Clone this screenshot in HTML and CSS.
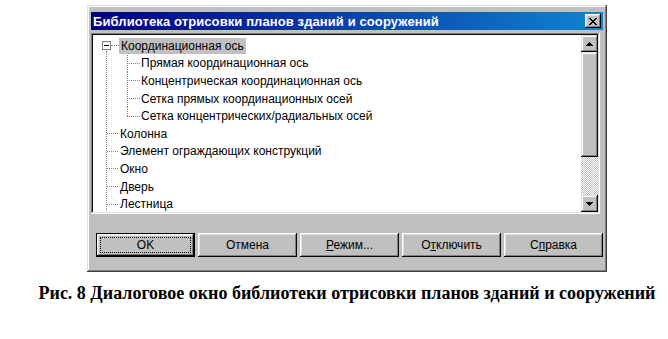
FILE: index.html
```html
<!DOCTYPE html>
<html lang="ru">
<head>
  <meta charset="UTF-8">
  <title>Библиотека отрисовки планов зданий и сооружений</title>
  <link rel="stylesheet" href="styles.css">
</head>
<body>
  <div class="figure">
    <div class="dialog">
      <!-- title bar -->
      <div class="titlebar">
        <span class="title">Библиотека отрисовки планов зданий и сооружений</span>
        <span class="close">
          <svg width="8" height="7" viewBox="0 0 8 7"><path d="M0 0h2v1h1v1h2V1h1V0h2v1H7v1H6v1H5v1h1v1h1v1h1v1H6V6H5V5H3v1H2v1H0V6h1V5h1V4h1V3H2V2H1V1H0z" fill="#000"/></svg>
        </span>
      </div>

      <!-- tree -->
      <div class="tree-box">
        <div class="tree">
          <div class="row root">
            <span class="expander"><i></i></span>
            <span class="hline"></span>
            <span class="label selected">Координационная ось</span>
          </div>
          <div class="level">
            <ul class="sub">
              <li class="item"><span class="stub"></span><span class="label">Прямая координационная ось</span></li>
              <li class="item"><span class="stub"></span><span class="label">Концентрическая координационная ось</span></li>
              <li class="item"><span class="stub"></span><span class="label">Сетка прямых координационных осей</span></li>
              <li class="item last"><span class="stub"></span><span class="label">Сетка концентрических/радиальных осей</span></li>
            </ul>
            <ul class="top">
              <li class="item"><span class="hline"></span><span class="label">Колонна</span></li>
              <li class="item"><span class="hline"></span><span class="label">Элемент ограждающих конструкций</span></li>
              <li class="item"><span class="hline"></span><span class="label">Окно</span></li>
              <li class="item"><span class="hline"></span><span class="label">Дверь</span></li>
              <li class="item"><span class="hline"></span><span class="label">Лестница</span></li>
            </ul>
          </div>
        </div>
        <div class="scrollbar">
          <span class="sb-btn">
            <svg width="7" height="4" viewBox="0 0 7 4"><path d="M3 0h1v1h1v1h1v1h1v1H0V3h1V2h1V1h1z" fill="#000"/></svg>
          </span>
          <span class="sb-thumb"></span>
          <span class="sb-track"></span>
          <span class="sb-btn">
            <svg width="7" height="4" viewBox="0 0 7 4"><path d="M0 0h7v1H6v1H5v1H4v1H3V3H2V2H1V1H0z" fill="#000"/></svg>
          </span>
        </div>
      </div>

      <!-- buttons -->
      <div class="buttons">
        <button class="btn default"><span class="focus">OK</span></button>
        <button class="btn">Отмена</button>
        <button class="btn"><u>Р</u>ежим...</button>
        <button class="btn">О<u>т</u>ключить</button>
        <button class="btn">С<u>п</u>равка</button>
      </div>
    </div>

    <p class="caption">Рис. 8 Диалоговое окно библиотеки отрисовки планов зданий и сооружений</p>
  </div>
</body>
</html>
```

FILE: styles.css
```css
/* page */
body {
  margin: 0;
  background: #fff;
  font-family: "Liberation Sans", Arial, sans-serif;
}

.figure {
  width: 520px;
  padding: 5px 0 0 87px;
}

/* dialog window */
.dialog {
  box-sizing: border-box;
  width: 520px;
  height: 267px;
  padding: 7px 4px 3px 4px;
  background: #c0c0c0;
  box-shadow: inset -1px -1px #404040, inset 1px 1px #dfdfdf, inset -2px -2px #808080, inset 2px 2px #fff;
}

.titlebar {
  height: 18px;
  display: flex;
  align-items: center;
  justify-content: space-between;
  padding: 0 2px 0 2px;
  background: linear-gradient(to right, #000080, #1084d0);
}

.title {
  color: #fff;
  font-weight: bold;
  font-size: 13px;
  letter-spacing: 0.1px;
}

.close {
  width: 16px;
  height: 14px;
  display: flex;
  align-items: center;
  justify-content: center;
  background: #c0c0c0;
  box-shadow: inset -1px -1px #0a0a0a, inset 1px 1px #fff, inset -2px -2px #808080, inset 2px 2px #dfdfdf;
}

/* tree view */
.tree-box {
  box-sizing: border-box;
  width: 509px;
  height: 181px;
  margin-top: 3px;
  padding: 2px;
  display: flex;
  background: #fff;
  box-shadow: inset -1px -1px #fff, inset 1px 1px #808080, inset -2px -2px #dfdfdf, inset 2px 2px #0a0a0a;
}

.tree {
  flex: 1;
  overflow: hidden;
  padding: 2px 0 0 9px;
  font-size: 12px;
  color: #000;
}

.tree ul {
  list-style: none;
  margin: 0;
  padding: 0;
}

.row,
.item {
  height: 17.6px;
  display: flex;
  align-items: center;
  white-space: nowrap;
}

.expander {
  box-sizing: border-box;
  width: 9px;
  height: 9px;
  flex: none;
  border: 1px solid #808080;
  background: #fff;
  display: flex;
  align-items: center;
  justify-content: center;
}
.expander i {
  width: 5px;
  height: 1px;
  background: #000;
}

.hline {
  width: 8px;
  flex: none;
  border-top: 1px dotted #808080;
}
.top .hline {
  width: 11px;
}

.label {
  padding: 1px 2px;
}
.label.selected {
  background: #c0c0c0;
}

.level {
  margin: -4px 0 0 4px;
  padding-top: 4px;
  border-left: 1px dotted #808080;
  height: 200px;
}

.sub {
  margin-left: 20px !important;
}
.sub .label {
  padding-left: 1px;
}

.stub {
  width: 13px;
  flex: none;
  align-self: stretch;
  background:
    repeating-linear-gradient(to bottom, #808080 0 1px, transparent 1px 2px) left top / 1px 100% no-repeat,
    repeating-linear-gradient(to right, #808080 0 1px, transparent 1px 2px) left center / 100% 1px no-repeat;
}
.last .stub {
  background-size: 1px 50%, 100% 1px;
}

/* scrollbar */
.scrollbar {
  width: 17px;
  display: flex;
  flex-direction: column;
}

.sb-btn,
.sb-thumb {
  background: #c0c0c0;
  box-shadow: inset -1px -1px #0a0a0a, inset 1px 1px #dfdfdf, inset -2px -2px #808080, inset 2px 2px #fff;
}

.sb-btn {
  height: 17px;
  display: flex;
  align-items: center;
  justify-content: center;
}

.sb-thumb {
  height: 105px;
}

.sb-track {
  flex: 1;
  background: repeating-conic-gradient(#c0c0c0 0 25%, #fff 0 50%) 0 0 / 2px 2px;
}

/* buttons */
.buttons {
  display: flex;
  gap: 3px;
  margin: 19px 0 0 5px;
}

.btn {
  width: 99px;
  height: 24px;
  padding: 0;
  border: none;
  background: #c0c0c0;
  font-family: "Liberation Sans", Arial, sans-serif;
  font-size: 12px;
  color: #000;
  box-shadow: inset -1px -1px #0a0a0a, inset 1px 1px #fff, inset -2px -2px #808080, inset 2px 2px #dfdfdf;
}

.btn.default {
  display: flex;
  padding: 4px;
  box-shadow: inset 0 0 0 1px #000, inset -2px -2px #0a0a0a, inset 2px 2px #fff, inset -3px -3px #808080, inset 3px 3px #dfdfdf;
}

.focus {
  flex: 1;
  display: flex;
  align-items: center;
  justify-content: center;
  border: 1px dotted #000;
}

/* caption */
.caption {
  display: flex;
  justify-content: center;
  margin: 11px 0 0;
  white-space: nowrap;
  font-family: "Liberation Serif", "Times New Roman", serif;
  font-weight: bold;
  font-size: 18px;
}
```
